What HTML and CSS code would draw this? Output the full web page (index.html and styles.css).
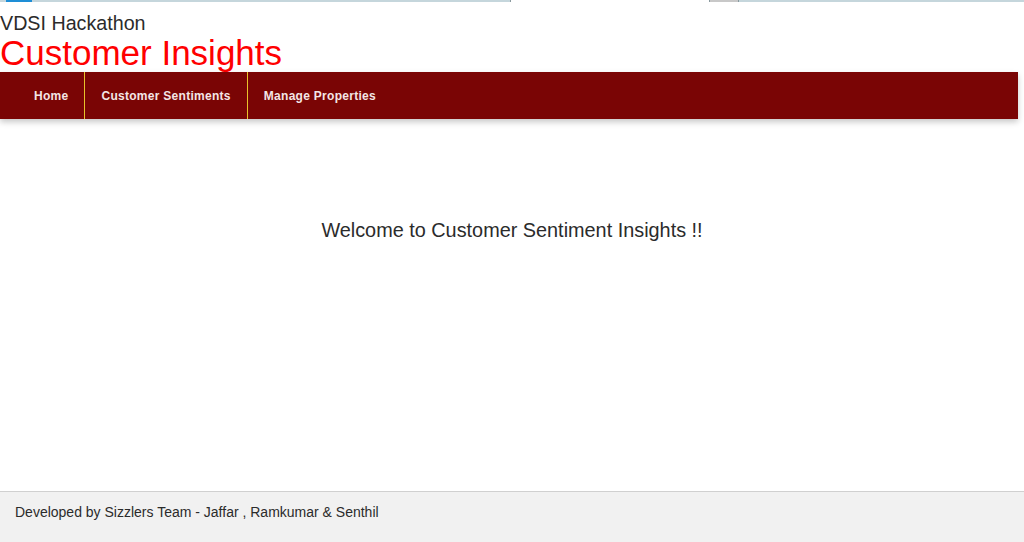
FILE: index.html
```html
<!DOCTYPE html>
<html>
<head>
<meta charset="utf-8">
<link rel="stylesheet" href="styles.css">
</head>
<body>
<div class="topstrip">
  <span class="seg-gap1"></span><span class="seg-blue"></span><span class="seg-gap2"></span><span class="seg-white"></span><span class="seg-grey"></span>
</div>
<header class="header">
  <div class="sub">VDSI Hackathon</div>
  <div class="title">Customer Insights</div>
</header>
<nav class="nav">
  <a class="nav-item first">Home</a>
  <a class="nav-item">Customer Sentiments</a>
  <a class="nav-item last">Manage Properties</a>
</nav>
<main class="main">
  <p class="welcome">Welcome to Customer Sentiment Insights !!</p>
</main>
<footer class="footer">Developed by Sizzlers Team - Jaffar , Ramkumar &amp; Senthil</footer>
</body>
</html>
```
FILE: styles.css
```css
html, body { margin: 0; padding: 0; }
body {
  width: 1024px;
  height: 542px;
  overflow: hidden;
  font-family: "Liberation Sans", Arial, sans-serif;
  background: #fff;
  display: flex;
  flex-direction: column;
}
.topstrip {
  height: 2px;
  background: #c5d6dc;
  display: flex;
}
.seg-gap1 { width: 6px; }
.seg-blue { width: 26px; background: #1e8ed6; }
.seg-gap2 { width: 478px; }
.seg-white { width: 198px; background: #fff; border-left: 1px solid #8a9a9f; border-right: 1px solid #8a9a9f; }
.seg-grey { width: 28px; background: #c8c8c8; border-right: 1px solid #8a9a9f; }
.header {
  padding: 11px 0 0 0;
  height: 59px;
}
.sub {
  font-size: 19.7px;
  line-height: 20px;
  color: #2b2b2b;
}
.title {
  font-size: 35px;
  line-height: 38px;
  color: #ff0000;
  margin-top: 1px;
}
.nav {
  height: 47px;
  background: #7a0505;
  display: flex;
  align-items: stretch;
  padding-left: 18px;
  margin-right: 6px;
  box-shadow: 0 3px 6px rgba(0,0,0,0.22);
}
.nav-item {
  display: flex;
  align-items: center;
  padding: 0 16px 0 16px;
  color: #f4e6e6;
  font-weight: bold;
  font-size: 12px;
  letter-spacing: 0.28px;
  border-right: 1px solid #e8c22a;
}
.nav-item.last { border-right: none; }
.main {
  flex: 1;
}
.welcome {
  margin: 99px 0 0 0;
  text-align: center;
  font-size: 19.85px;
  line-height: 24px;
  color: #2b2b2b;
}
.footer {
  height: 51px;
  border-top: 1px solid #d0d0d0;
  background: #f1f1f1;
  color: #2b2b2b;
  font-size: 14px;
  line-height: 20px;
  padding: 10px 0 0 15px;
  box-sizing: border-box;
}
```
